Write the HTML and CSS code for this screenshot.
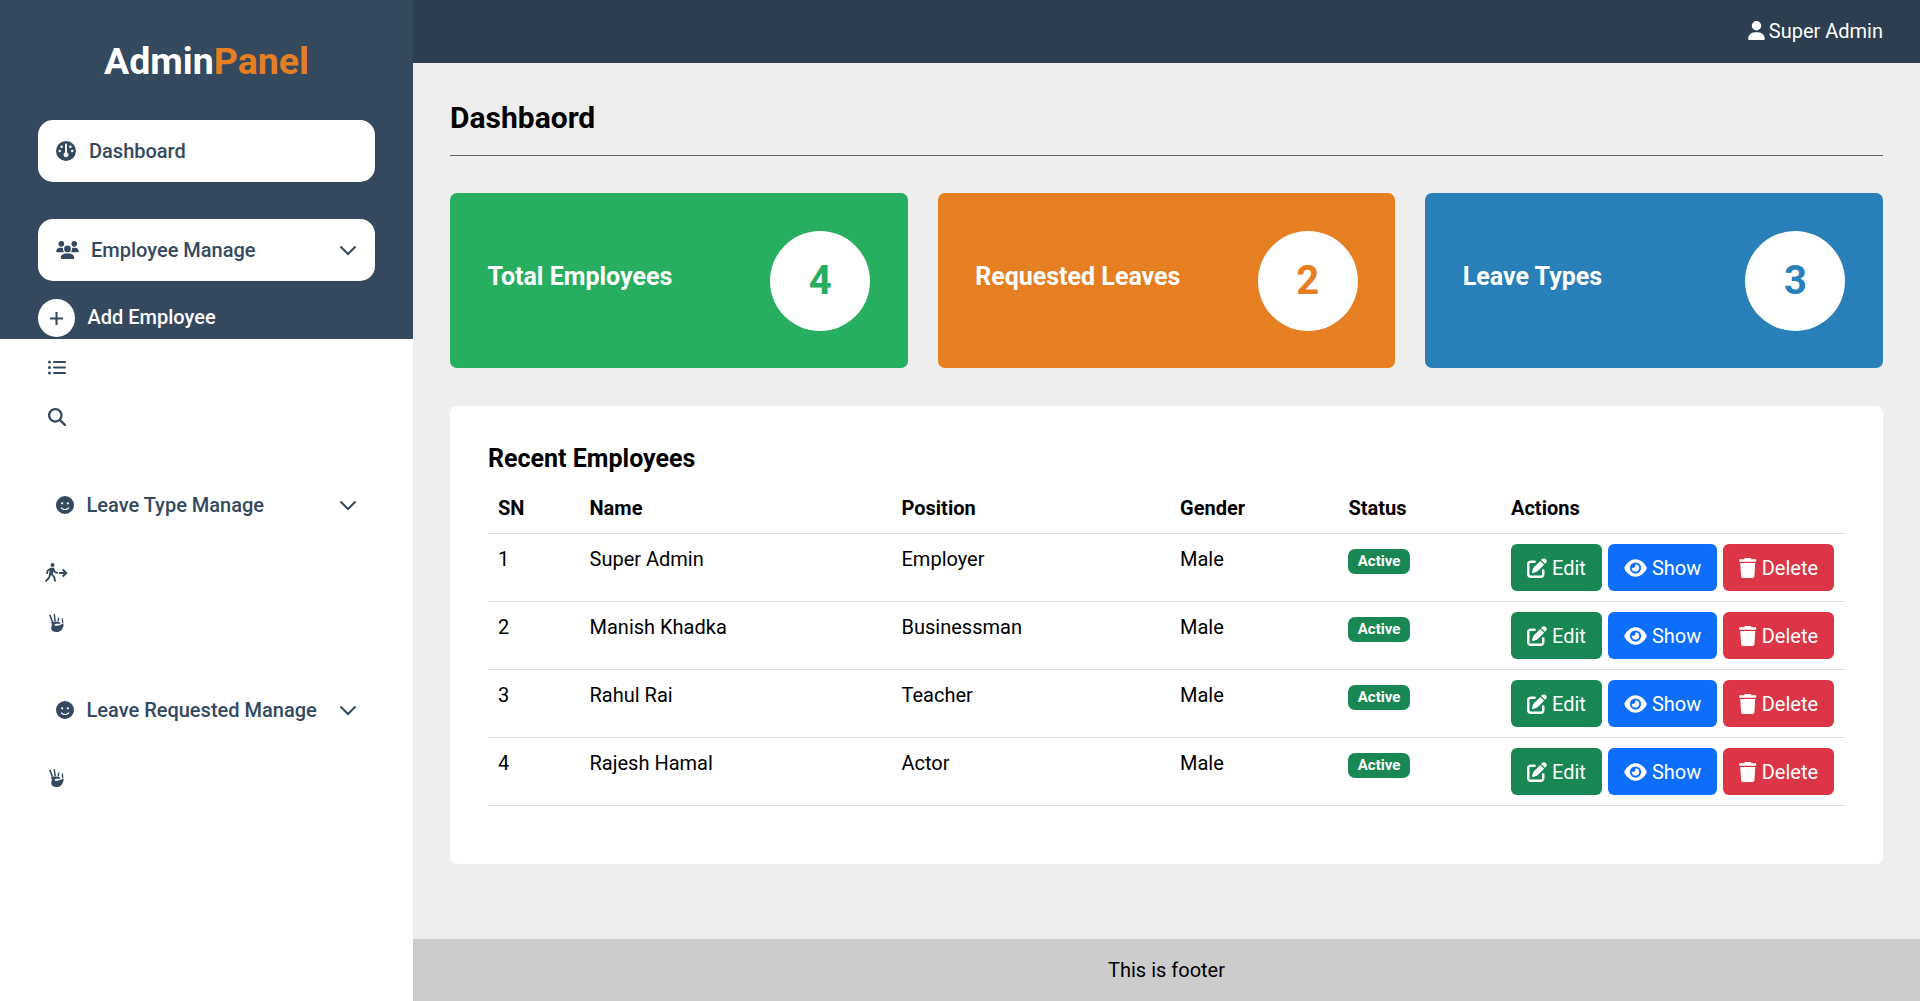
FILE: index.html
```html
<!DOCTYPE html>
<html lang="en">
<head>
<meta charset="utf-8">
<title>Admin Panel</title>
<link rel="stylesheet" href="styles.css">
</head>
<body>
<svg class="defs" aria-hidden="true">
  <symbol id="i-user" viewBox="0 0 448 512"><path d="M224 256A128 128 0 1 0 224 0a128 128 0 1 0 0 256zm-45.700 48C79.800 304 0 383.800 0 482.300C0 498.700 13.300 512 29.700 512H418.300c16.400 0 29.700-13.300 29.700-29.700C448 383.800 368.200 304 269.700 304H178.300z"/></symbol>
  <symbol id="i-gauge" viewBox="0 0 512 512"><path d="M0 256a256 256 0 1 1 512 0A256 256 0 1 1 0 256zm320 96c0-26.900-16.500-49.900-40-59.300V88c0-13.300-10.700-24-24-24s-24 10.700-24 24V292.700c-23.500 9.500-40 32.500-40 59.300c0 35.300 28.700 64 64 64s64-28.700 64-64zM144 176a32 32 0 1 0 0-64 32 32 0 1 0 0 64zm-16 80a32 32 0 1 0 -64 0 32 32 0 1 0 64 0zm288 32a32 32 0 1 0 0-64 32 32 0 1 0 0 64zM400 144a32 32 0 1 0 -64 0 32 32 0 1 0 64 0z"/></symbol>
  <symbol id="i-users" viewBox="0 0 640 512"><path d="M144 0a80 80 0 1 1 0 160A80 80 0 1 1 144 0zM512 0a80 80 0 1 1 0 160A80 80 0 1 1 512 0zM0 298.700C0 239.800 47.800 192 106.700 192h42.700c15.900 0 31 3.500 44.600 9.700c-1.300 7.200-1.900 14.700-1.900 22.300c0 38.200 16.800 72.500 43.300 96c-.2 0-.4 0-.7 0H21.300C9.600 320 0 310.400 0 298.700zM405.300 320c-.2 0-.4 0-.7 0c26.600-23.500 43.300-57.800 43.300-96c0-7.600-.7-15-1.900-22.300c13.600-6.300 28.700-9.700 44.600-9.700h42.700C592.200 192 640 239.800 640 298.700c0 11.800-9.600 21.300-21.300 21.300H405.300zM224 224a96 96 0 1 1 192 0 96 96 0 1 1 -192 0zM128 485.300C128 411.700 187.700 352 261.300 352H378.700C452.300 352 512 411.700 512 485.300c0 14.700-11.900 26.700-26.700 26.700H154.700c-14.700 0-26.700-11.900-26.700-26.700z"/></symbol>
  <symbol id="i-smile" viewBox="0 0 512 512"><path d="M256 512A256 256 0 1 0 256 0a256 256 0 1 0 0 512zM164.100 325.500C182 346.200 212.600 368 256 368s74-21.800 91.900-42.500c5.800-6.700 15.900-7.400 22.600-1.600s7.400 15.900 1.600 22.600C349.800 372.100 311.100 400 256 400s-93.800-27.900-116.100-53.500c-5.800-6.700-5.100-16.800 1.600-22.600s16.800-5.100 22.600 1.600zM144.400 208a32 32 0 1 1 64 0 32 32 0 1 1 -64 0zm192-32a32 32 0 1 1 0 64 32 32 0 1 1 0-64z"/></symbol>
  <symbol id="i-search" viewBox="0 0 512 512"><path d="M416 208c0 45.900-14.900 88.300-40 122.700L502.600 457.400c12.500 12.500 12.500 32.800 0 45.300s-32.800 12.500-45.300 0L330.700 376c-34.400 25.200-76.800 40-122.700 40C93.100 416 0 322.900 0 208S93.100 0 208 0S416 93.100 416 208zM208 352a144 144 0 1 0 0-288 144 144 0 1 0 0 288z"/></symbol>
  <symbol id="i-list" viewBox="0 0 18 15"><circle cx="1.500" cy="2" r="1.500"/><circle cx="1.500" cy="7.500" r="1.500"/><circle cx="1.500" cy="13" r="1.500"/><rect x="5" y="1" width="13" height="2" rx="1"/><rect x="5" y="6.500" width="13" height="2" rx="1"/><rect x="5" y="12" width="13" height="2" rx="1"/></symbol>
  <symbol id="i-walk" viewBox="0 0 23 19"><circle cx="7.500" cy="2" r="2"/><path d="M5.300 4.800h3.600l1.600 3.400 2.600 1-.7 1.700-3.300-1.300-.7-1.400-.7 3 2.300 2.200 1.100 5.100h-1.900l-1-4.400-2.200-2.100-1.500 3.700L1.300 19 0 17.700l3.300-3.500L4.700 7.500 3.300 8.300l-.4 2.800-1.700-.2.500-3.600z"/><path d="M14 10h7M17.700 6.500 21.200 10l-3.500 3.500" fill="none" stroke="currentColor" stroke-width="2"/></symbol>
  <symbol id="i-hand" viewBox="0 0 15 18"><path d="M0 1 1.500.6 4.200 7.500 2.700 8zM4.500.2 5.900 0 6.900 7 5.400 7.200zM9 3.500 10.400 3.700 9.900 7.500 8.500 7.300zM12.700 4.500H14L14.300 9 13 9z"/><path d="M1.200 8.800C3.500 7.300 8 7 10.500 8.200c.9.500 1 1.200.8 1.500-1.500.1-3.800-.3-5.300.5-.8.500-.5 1.300.4 1.500 2.400.5 5.200-.5 8.100-2.400.6 4.300-2.200 8.700-7 8.700-3.400 0-5.300-1.300-5.300-3.700 0-1.300.5-2.100.6-3 .1-.9-.3-1.700-.6-2.500z"/></symbol>
  <symbol id="i-pen" viewBox="0 0 512 512"><path d="M471.600 21.700c-21.900-21.900-57.300-21.900-79.200 0L362.300 51.700l97.900 97.900 30.100-30.100c21.900-21.900 21.900-57.300 0-79.200L471.600 21.700zm-299.200 220c-6.100 6.100-10.800 13.600-13.500 21.900l-29.600 88.800c-2.900 8.600-.6 18.100 5.800 24.600s15.900 8.700 24.600 5.800l88.800-29.600c8.200-2.700 15.700-7.400 21.900-13.500L437.700 172.300 339.700 74.300 172.400 241.700zM96 64C43 64 0 107 0 160V416c0 53 43 96 96 96H352c53 0 96-43 96-96V320c0-17.700-14.300-32-32-32s-32 14.300-32 32v96c0 17.700-14.300 32-32 32H96c-17.700 0-32-14.300-32-32V160c0-17.700 14.300-32 32-32h96c17.700 0 32-14.300 32-32s-14.300-32-32-32H96z"/></symbol>
  <symbol id="i-eye" viewBox="0 0 576 512"><path d="M288 32c-80.800 0-145.500 36.800-192.600 80.600C48.600 156 17.300 208 2.500 243.700c-3.300 7.900-3.300 16.700 0 24.600C17.300 304 48.600 356 95.400 399.400C142.500 443.200 207.200 480 288 480s145.500-36.800 192.600-80.600c46.800-43.500 78.100-95.400 92.900-131.100c3.300-7.900 3.300-16.700 0-24.600c-14.800-35.700-46.100-87.700-92.900-131.100C433.500 68.800 368.800 32 288 32zM144 256a144 144 0 1 1 288 0 144 144 0 1 1 -288 0zm144-64c0 35.300-28.700 64-64 64c-7.100 0-13.900-1.200-20.300-3.300c-5.500-1.800-11.900 1.600-11.700 7.400c.3 6.900 1.300 13.800 3.200 20.700c13.700 51.200 66.400 81.600 117.600 67.900s81.600-66.400 67.900-117.600c-11.100-41.500-47.800-69.400-88.600-71.100c-5.800-.2-9.200 6.100-7.400 11.700c2.100 6.400 3.300 13.200 3.300 20.300z"/></symbol>
  <symbol id="i-trash" viewBox="0 0 448 512"><path d="M135.200 17.700L128 32H32C14.300 32 0 46.300 0 64S14.300 96 32 96H416c17.700 0 32-14.300 32-32s-14.300-32-32-32H320l-7.200-14.300C307.400 6.800 296.300 0 284.200 0H163.800c-12.100 0-23.200 6.800-28.600 17.700zM416 128H32L53.200 467c1.600 25.300 22.600 45 47.900 45H346.900c25.300 0 46.300-19.700 47.900-45L416 128z"/></symbol>
  <symbol id="i-chevron" viewBox="0 0 18 11"><path d="M1.500 1.500 9 9l7.500-7.500" fill="none" stroke="currentColor" stroke-width="2"/></symbol>
</svg>

<div class="layout">
  <aside class="sidebar">
    <div class="sidebar-top">
      <div class="logo">Admin<span class="logo-accent">Panel</span></div>
      <a class="pill pill-dash"><svg class="ic ic-gauge"><use href="#i-gauge"/></svg>Dashboard</a>
      <a class="pill pill-emp"><svg class="ic ic-users"><use href="#i-users"/></svg><span class="grow">Employee Manage</span><svg class="chev"><use href="#i-chevron"/></svg></a>
      <a class="add-row"><span class="add-circle"><svg class="plus" viewBox="0 0 16 16"><path d="M8 1v14M1 8h14"/></svg></span><span class="add-label">Add Employee</span></a>
    </div>
    <div class="side-rest">
      <svg class="sub sub-list"><use href="#i-list"/></svg>
      <svg class="sub sub-search"><use href="#i-search"/></svg>
      <div class="group-head gh-type"><svg class="ic ic-smile"><use href="#i-smile"/></svg><span class="grow">Leave Type Manage</span><svg class="chev"><use href="#i-chevron"/></svg></div>
      <svg class="sub sub-walk"><use href="#i-walk"/></svg>
      <svg class="sub sub-hand sub-hand-a"><use href="#i-hand"/></svg>
      <div class="group-head gh-req"><svg class="ic ic-smile"><use href="#i-smile"/></svg><span class="grow">Leave Requested Manage</span><svg class="chev"><use href="#i-chevron"/></svg></div>
      <svg class="sub sub-hand sub-hand-b"><use href="#i-hand"/></svg>
    </div>
  </aside>

  <div class="main">
    <header class="topbar"><svg class="ic-user"><use href="#i-user"/></svg>Super Admin</header>
    <main class="content">
      <h1 class="page-title">Dashbaord</h1>
      <section class="cards">
        <div class="card card-green"><span class="card-label">Total Employees</span><span class="card-num">4</span></div>
        <div class="card card-orange"><span class="card-label">Requested Leaves</span><span class="card-num">2</span></div>
        <div class="card card-blue"><span class="card-label">Leave Types</span><span class="card-num">3</span></div>
      </section>
      <section class="panel">
        <h2 class="panel-title">Recent Employees</h2>
        <table class="tbl">
          <thead>
            <tr><th class="c-sn">SN</th><th class="c-name">Name</th><th class="c-pos">Position</th><th class="c-gen">Gender</th><th class="c-stat">Status</th><th class="c-act">Actions</th></tr>
          </thead>
          <tbody>
            <tr><td>1</td><td>Super Admin</td><td>Employer</td><td>Male</td><td><span class="badge">Active</span></td><td class="acts"><a class="btn btn-edit"><svg class="bi"><use href="#i-pen"/></svg>Edit</a><a class="btn btn-show"><svg class="bi bi-eye"><use href="#i-eye"/></svg>Show</a><a class="btn btn-del"><svg class="bi bi-trash"><use href="#i-trash"/></svg>Delete</a></td></tr>
            <tr><td>2</td><td>Manish Khadka</td><td>Businessman</td><td>Male</td><td><span class="badge">Active</span></td><td class="acts"><a class="btn btn-edit"><svg class="bi"><use href="#i-pen"/></svg>Edit</a><a class="btn btn-show"><svg class="bi bi-eye"><use href="#i-eye"/></svg>Show</a><a class="btn btn-del"><svg class="bi bi-trash"><use href="#i-trash"/></svg>Delete</a></td></tr>
            <tr><td>3</td><td>Rahul Rai</td><td>Teacher</td><td>Male</td><td><span class="badge">Active</span></td><td class="acts"><a class="btn btn-edit"><svg class="bi"><use href="#i-pen"/></svg>Edit</a><a class="btn btn-show"><svg class="bi bi-eye"><use href="#i-eye"/></svg>Show</a><a class="btn btn-del"><svg class="bi bi-trash"><use href="#i-trash"/></svg>Delete</a></td></tr>
            <tr><td>4</td><td>Rajesh Hamal</td><td>Actor</td><td>Male</td><td><span class="badge">Active</span></td><td class="acts"><a class="btn btn-edit"><svg class="bi"><use href="#i-pen"/></svg>Edit</a><a class="btn btn-show"><svg class="bi bi-eye"><use href="#i-eye"/></svg>Show</a><a class="btn btn-del"><svg class="bi bi-trash"><use href="#i-trash"/></svg>Delete</a></td></tr>
          </tbody>
        </table>
      </section>
    </main>
    <footer class="footer">This is footer</footer>
  </div>
</div>
</body>
</html>
```

FILE: styles.css
```css
* { box-sizing: border-box; }
html, body { height: 100%; }
body {
  margin: 0;
  font-family: Roboto, "Liberation Sans", sans-serif;
  font-size: 20px;
  line-height: 1.5;
  color: #000;
  background: #fff;
  overflow: hidden;
}
.defs { display: none; }
svg { fill: currentColor; display: block; flex: none; }

.layout { display: flex; height: 1001px; }

/* Sidebar */
.sidebar { width: 413px; flex: none; background: #fff; color: #34495e; }
.sidebar-top {
  height: 339px;
  background: #34495e;
  padding: 39px 38px 0;
}
.logo {
  font-size: 37.5px;
  font-weight: 700;
  line-height: 44px;
  text-align: center;
  color: #fff;
  margin-bottom: 37px;
}
.logo-accent { color: #e67e22; }
.pill {
  display: flex;
  align-items: center;
  height: 62px;
  padding: 0 18px;
  background: #fff;
  border-radius: 15px;
  color: #34495e;
  font-weight: 500;
}
.pill-dash { margin-bottom: 37px; }
.pill-emp { margin-bottom: 18px; }
.ic { fill: currentColor; }
.ic-gauge { width: 20px; height: 20px; margin-right: 13px; }
.ic-users { width: 23px; height: 18px; margin-right: 12px; }
.ic-smile { width: 18px; height: 18px; margin-right: 12.5px; }
.grow { flex: 1; }
.chev { width: 18px; height: 11px; }
.add-row {
  display: flex;
  align-items: center;
  height: 38px;
  color: #fff;
  font-weight: 500;
}
.add-label { margin-top: -2px; }
.add-circle {
  width: 37px;
  height: 38px;
  border-radius: 50%;
  background: #fff;
  display: flex;
  align-items: center;
  justify-content: center;
  margin-right: 12.5px;
}
.plus { width: 15px; height: 15px; fill: none; stroke: #34495e; stroke-width: 2.2; }

.side-rest { display: flex; flex-direction: column; padding: 0 38px; }
.sub { margin-left: 10px; }
.sub-list { width: 18px; height: 15px; margin-top: 21px; }
.sub-search { width: 18px; height: 18px; margin-top: 33px; }
.group-head {
  display: flex;
  align-items: center;
  height: 30px;
  padding: 0 18px;
  font-weight: 500;
}
.gh-type { margin-top: 64px; }
.gh-req { margin-top: 63px; }
.sub-walk { width: 23px; height: 19px; margin: 43px 0 0 7px; }
.sub-hand { width: 15px; height: 18px; margin-left: 11px; }
.sub-hand-a { margin-top: 32px; }
.sub-hand-b { margin-top: 44px; }

/* Main column */
.main { flex: 1; min-width: 0; display: flex; flex-direction: column; background: #eee; }
.topbar {
  height: 63px;
  flex: none;
  background: #2c3e50;
  color: #fff;
  display: flex;
  align-items: center;
  justify-content: flex-end;
  padding: 0 37px 2px;
}
.ic-user { width: 17px; height: 19px; margin-right: 4px; }
.content { flex: 1; padding: 37px 37px 0; }
.page-title {
  margin: 0 0 37px;
  font-size: 30px;
  line-height: 36px;
  font-weight: 700;
  padding-bottom: 19px;
  border-bottom: 1px solid #666;
}
.cards { display: grid; grid-template-columns: repeat(3, 1fr); gap: 30px; margin-bottom: 38px; }
.card {
  height: 175px;
  padding: 37.5px;
  border-radius: 7px;
  display: flex;
  justify-content: space-between;
  align-items: center;
  color: #fff;
}
.card-green { background: #27ae60; --accent: #27ae60; }
.card-orange { background: #e67e22; --accent: #e67e22; }
.card-blue { background: #2980b9; --accent: #2980b9; }
.card-label { font-size: 25px; font-weight: 700; line-height: 30px; margin-bottom: 8px; }
.card-num {
  width: 100px;
  height: 100px;
  border-radius: 50%;
  background: #fff;
  color: var(--accent);
  font-size: 40px;
  font-weight: 700;
  line-height: 60px;
  padding-top: 1px;
  display: flex;
  align-items: center;
  justify-content: center;
}
.panel { background: #fff; border-radius: 7px; padding: 38px; height: 458px; }
.panel-title { margin: 0 0 9px; font-size: 25px; line-height: 30px; font-weight: 700; }
.tbl { width: 100%; border-collapse: collapse; table-layout: fixed; }
.tbl th, .tbl td { padding: 10px; text-align: left; vertical-align: top; border-bottom: 1px solid #dee2e6; }
.tbl th { font-weight: 700; }
.c-sn { width: 91.5px; }
.c-name { width: 312px; }
.c-pos { width: 278.5px; }
.c-gen { width: 168.5px; }
.c-stat { width: 162.5px; }
.badge {
  display: inline-block;
  background: #198754;
  color: #fff;
  font-size: 15px;
  font-weight: 700;
  line-height: 1;
  padding: 5.25px 9.75px;
  margin-left: -0.5px;
  border-radius: 7px;
}
.acts { white-space: nowrap; }
.btn {
  display: inline-flex;
  align-items: center;
  height: 47px;
  padding: 0 16px;
  margin-right: 6px;
  border-radius: 6px;
  color: #fff;
  vertical-align: top;
}
.btn-edit { background: #198754; }
.btn-show { background: #0d6efd; }
.btn-del { background: #dc3545; margin-right: 0; padding-right: 15.5px; }
.bi { width: 20px; height: 20px; margin-right: 5px; }
.bi-eye { width: 23px; height: 20px; }
.bi-trash { width: 17.5px; height: 20px; }

.footer {
  height: 62px;
  flex: none;
  background: #ccc;
  display: flex;
  align-items: center;
  justify-content: center;
}
```
